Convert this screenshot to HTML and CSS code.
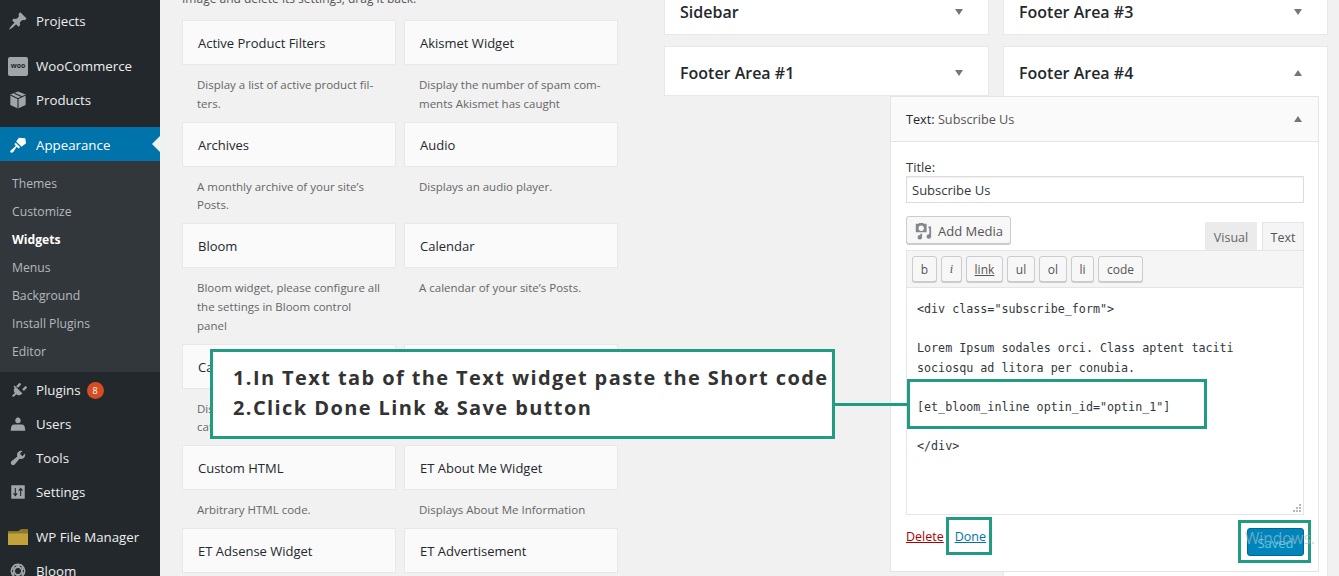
FILE: index.html
```html
<!DOCTYPE html>
<html lang="en">
<head>
<meta charset="utf-8">
<title>Widgets</title>
<link rel="stylesheet" href="styles.css">
</head>
<body>
<div class="page">
  <nav class="menu">
    <a class="item item-projects"><svg class="ico" viewBox="0 0 20 20"><path d="M10.44 3.020l1.820-1.820 6.360 6.350-1.830 1.820c-1.050-.68-2.480-.57-3.410.36l-.75.750c-.92.930-1.040 2.350-.35 3.410l-1.830 1.820-2.410-2.410-2.800 2.790c-.42.420-3.380 2.710-3.800 2.290s1.860-3.390 2.280-3.810l2.790-2.790L4.100 9.360l1.830-1.820c1.050.69 2.480.57 3.400-.36l.75-.75c.93-.92 1.050-2.350.36-3.410z"/></svg>Projects</a>
    <a class="item item-woo"><span class="woo">woo</span>WooCommerce</a>
    <a class="item item-products"><svg class="ico" viewBox="0 0 20 20"><path d="M10 .5l8.500 3.500v11.500L10 19.500l-8.500-4V4z"/><path class="seam" d="M1.500 4.500L10 8.500l8.500-4M10 8.500v11M6 2.500l8.500 4"/></svg>Products</a>
    <a class="item current"><svg class="ico" viewBox="0 0 20 20"><path d="M11 2l7 .5 1 5.500-5 4-6-6zM7.500 7.500l5 5-2 1.500-2-2-3.500 5.500c-1.500 1.500-4 1.500-3.500-1l6-5.500L6 9z"/></svg>Appearance</a>
    <div class="submenu">
      <a>Themes</a><a>Customize</a><a class="on">Widgets</a><a>Menus</a><a>Background</a><a>Install Plugins</a><a>Editor</a>
    </div>
    <a class="item"><svg class="ico" viewBox="0 0 20 20"><path d="M13.110 4.360L9.870 7.600 8 5.730l3.240-3.240c.35-.34 1.050-.25 1.550.25.5.51.59 1.200.32 1.620zm-8 1.770l.91-1.120 9.010 9.010-1.190.84c-1.170 1.100-2.600 1.140-3.630.85-.93-.26-1.640-.69-2.030-.99l-2.590 2.620c-.39.39-1.340.39-1.730 0s-.39-1.030 0-1.420l2.600-2.590c-.3-.4-.73-1.100-.99-2.030-.3-1.030-.26-2.460.84-3.630zm11.400 4.920l-1.870-1.870 3.240-3.240c.38-.35 1.070-.26 1.580.24.5.5.59 1.200.24 1.630z"/></svg>Plugins<span class="badge">8</span></a>
    <a class="item"><svg class="ico" viewBox="0 0 20 20"><path d="M10 9.250c-2.270 0-2.900-1.580-3.030-2.510C6.810 5.620 7.390 2.660 10 2.660s3.190 2.960 3.030 4.080c-.13.930-.76 2.510-3.030 2.510zm0 1.250c2.680 0 6-.4 7 1.400.85 1.700 1 5.600 1 5.600H2s.15-3.900 1-5.600c1-1.800 4.320-1.400 7-1.400z"/></svg>Users</a>
    <a class="item"><svg class="ico" viewBox="0 0 20 20"><path d="M16.680 9.770c-1.340 1.340-3.300 1.670-4.950.99l-5.410 6.520c-.99.990-2.590.990-3.570 0-.99-.98-.99-2.580 0-3.570l6.520-5.420c-.68-1.650-.35-3.610.99-4.950 1.280-1.280 3.120-1.620 4.720-1.060l-2.890 2.890 2.820 2.820 2.860-2.870c.53 1.580.18 3.390-1.090 4.650z"/></svg>Tools</a>
    <a class="item"><svg class="ico" viewBox="0 0 20 20"><path d="M2.500 2.500h15v15h-15z"/><path class="seam" d="M7 5.500v8M5 11.500l2 2.500 2-2.500M13 14.500v-8M11 8.500l2-2.500 2 2.500"/></svg>Settings</a>
    <a class="item item-fm"><svg class="folder" viewBox="0 0 20 16"><path d="M0 2.500h10l3-2h7V16H0z"/><path class="folder-top" d="M0 2.500h10l3-2h7v4H0z"/></svg>WP File Manager</a>
    <a class="item"><svg class="ico" viewBox="0 0 20 20"><g class="ring"><circle cx="10" cy="10" r="7.500"/><ellipse cx="10" cy="10" rx="7.500" ry="4"/><ellipse cx="10" cy="10" rx="7.500" ry="4" transform="rotate(60 10 10)"/><ellipse cx="10" cy="10" rx="7.500" ry="4" transform="rotate(120 10 10)"/></g></svg>Bloom</a>
  </nav>

  <main class="content">
    <section class="available">
      <p class="intro">Image and delete its settings, drag it back.</p>
      <div class="widget-grid">
        <div class="w"><h4>Active Product Filters</h4><p>Display a list of active product fil-<br>ters.</p></div>
        <div class="w"><h4>Akismet Widget</h4><p>Display the number of spam com-<br>ments Akismet has caught</p></div>
        <div class="w"><h4>Archives</h4><p>A monthly archive of your site’s<br>Posts.</p></div>
        <div class="w"><h4>Audio</h4><p>Displays an audio player.</p></div>
        <div class="w"><h4>Bloom</h4><p>Bloom widget, please configure all<br>the settings in Bloom control<br>panel</p></div>
        <div class="w"><h4>Calendar</h4><p>A calendar of your site’s Posts.</p></div>
        <div class="w"><h4>Categories</h4><p>Display a list or dropdown of<br>categories</p></div>
        <div class="w"><h4>Contact</h4><p>Contact widget</p></div>
        <div class="w"><h4>Custom HTML</h4><p>Arbitrary HTML code.</p></div>
        <div class="w"><h4>ET About Me Widget</h4><p>Displays About Me Information</p></div>
        <div class="w"><h4>ET Adsense Widget</h4><p>Display Adsense</p></div>
        <div class="w"><h4>ET Advertisement</h4><p>Display an advertisement</p></div>
      </div>
    </section>

    <section class="areas">
      <div class="area-col">
        <div class="area"><h3>Sidebar</h3><i class="tri down"></i></div>
        <div class="area"><h3>Footer Area #1</h3><i class="tri down"></i></div>
      </div>
      <div class="area-col">
        <div class="area"><h3>Footer Area #3</h3><i class="tri down"></i></div>
        <div class="area area-open"><h3>Footer Area #4</h3><i class="tri up"></i></div>
      </div>
    </section>

    <section class="panel">
      <header class="panel-head"><span><b>Text:</b> Subscribe Us</span><i class="tri up small"></i></header>
      <div class="panel-body">
        <label class="title-label">Title:</label>
        <div class="title-input">Subscribe Us</div>
        <div class="editor-top">
          <button class="btn add-media"><svg class="media-ico" viewBox="0 0 20 20"><path d="M2 2h3l1-1h4l1 1h3v9.500H2zm6 2a3 3 0 1 0 0 6 3 3 0 0 0 0-6zM16 5h3v11a2.500 2.500 0 1 1-2-2.400V7h-1zM9 13v4a2.500 2.500 0 1 1-2-2.400V13z"/></svg>Add Media</button>
          <div class="tabs"><span class="tab">Visual</span><span class="tab active">Text</span></div>
        </div>
        <div class="toolbar">
          <span class="q">b</span><span class="q it">i</span><span class="q ul">link</span><span class="q">ul</span><span class="q">ol</span><span class="q">li</span><span class="q">code</span>
        </div>
        <div class="code">
<pre>&lt;div class="subscribe_form"&gt;

Lorem Ipsum sodales orci. Class aptent taciti
sociosqu ad litora per conubia.

[et_bloom_inline optin_id="optin_1"]

&lt;/div&gt;</pre>
          <svg class="grip" viewBox="0 0 8 8"><path d="M6 0h2v2H6zM3 3h2v2H3zM6 3h2v2H6zM0 6h2v2H0zM3 6h2v2H3zM6 6h2v2H6z"/></svg>
        </div>
        <div class="panel-foot">
          <div class="links"><a class="del">Delete</a><a class="done">Done</a></div>
          <button class="save">Saved</button>
        </div>
      </div>
    </section>
  </main>

  <div class="callout">
    <div>1.In Text tab of the Text widget paste the Short code</div>
    <div>2.Click Done Link &amp; Save button</div>
  </div>
  <div class="connector"></div>
  <div class="mark mark-code"></div>
  <div class="mark mark-done"></div>
  <div class="mark mark-save"></div>
  <div class="watermark">Windows.</div>
</div>
</body>
</html>
```

FILE: styles.css
```css
* { box-sizing: border-box; }
html, body { margin: 0; height: 100%; overflow: hidden; }
body { font-family: "Open Sans", "Liberation Sans", sans-serif; font-size: 13px; color: #444; background: #f1f1f1; }
.page { position: relative; display: flex; width: 1339px; height: 576px; overflow: hidden; }

.menu { flex: 0 0 160px; background: #23282d; color: #eee; padding-top: 3px; height: 576px; overflow: hidden; }
.item { display: flex; align-items: center; height: 34px; padding: 2px 0 0 9px; color: #eee; font-size: 13.300px; position: relative; }
.ico { width: 18px; height: 18px; margin-right: 9px; fill: #a0a5aa; flex: none; }
.item-projects { padding-left: 8px; }
.item-projects .ico { width: 20px; height: 20px; margin-right: 8px; }
.seam { fill: none; stroke: #23282d; stroke-width: 1.200; }
.ring { fill: none; stroke: #a0a5aa; stroke-width: 1.400; }
.item-woo { margin-top: 11px; padding-left: 8px; }
.woo { width: 20px; height: 19px; margin-right: 8px; background: #a0a5aa; border-radius: 2px; color: #23282d; font-size: 7px; font-weight: 700; line-height: 18px; text-align: center; flex: none; }
.current { margin-top: 11px; background: #0073aa; color: #fff; }
.current .ico { fill: #fff; }
.current::after { content: ""; position: absolute; right: 0; top: 9px; border: 8px solid transparent; border-right-color: #f1f1f1; border-left-width: 0; }
.submenu { background: #32373c; padding: 9px 0 6px; }
.submenu a { display: block; height: 28px; line-height: 28px; padding-left: 12px; font-size: 12.200px; color: #b4b9be; }
.submenu .on { color: #fff; font-weight: 700; }
.badge { margin-left: 6px; width: 17px; height: 17px; border-radius: 50%; background: #d54e21; color: #fff; font-size: 9px; line-height: 17px; text-align: center; }
.item-fm { margin-top: 11px; padding-left: 8px; }
.folder { width: 20px; height: 16px; margin-right: 8px; fill: #c2a33a; flex: none; }
.folder-top { fill: #8f7a2c; }

.content { position: relative; flex: 1; min-width: 0; }
.available { position: absolute; left: 22px; top: -14px; width: 436px; }
.intro { margin: 0; height: 34px; line-height: 26px; font-size: 12px; color: #555; }
.widget-grid { display: grid; grid-template-columns: 214px 214px; column-gap: 8px; }
.w h4 { margin: 0; height: 45px; line-height: 45px; padding-left: 15px; font-size: 13px; font-weight: 500; color: #23282d; background: #fafafa; border: 1px solid #e8e8e8; }
.w p { margin: 0; padding: 11px 15px 8.500px; font-size: 11.500px; line-height: 18.600px; color: #666; white-space: nowrap; }

.areas { position: absolute; left: 504px; top: -15px; display: flex; gap: 14px; }
.area-col { width: 325px; display: flex; flex-direction: column; gap: 11px; }
.area { display: flex; justify-content: space-between; height: 50px; padding: 15px 25px 0 15px; background: #fff; border: 1px solid #e8e8e8; }
.area-open { height: 560px; border-bottom: 0; }
.area h3 { margin: 0; font-size: 16px; line-height: 22px; font-weight: 600; color: #23282d; }
.tri { width: 0; height: 0; margin-top: 8px; border-left: 4px solid transparent; border-right: 4px solid transparent; }
.tri.down { border-top: 6px solid #72777c; }
.tri.up { border-bottom: 6px solid #72777c; }

.panel { position: absolute; left: 730px; top: 96px; width: 429px; height: 476px; background: #fff; border: 1px solid #e5e5e5; }
.panel-head { display: flex; align-items: center; justify-content: space-between; height: 45px; padding: 0 16px 0 15px; background: #fafafa; border-bottom: 1px solid #e5e5e5; font-size: 12.700px; color: #555; }
.panel-head b { font-weight: 500; color: #23282d; }
.panel-head .tri { margin-top: 0; }
.panel-body { padding: 16px 14px 0 15px; }
.title-label { display: block; font-size: 13px; line-height: 18px; color: #32373c; }
.title-input { height: 27px; line-height: 27px; padding-left: 5px; border: 1px solid #ddd; font-size: 13px; color: #32373c; box-shadow: inset 0 1px 2px rgba(0,0,0,.07); }
.editor-top { display: flex; justify-content: space-between; align-items: flex-end; margin-top: 13px; height: 34px; }
.btn { display: flex; align-items: center; align-self: flex-start; height: 28px; padding: 2px 7px 0; background: #f7f7f7; border: 1px solid #ccc; border-radius: 3px; box-shadow: 0 1px 0 #ccc; font: 13px "Open Sans", sans-serif; color: #555; }
.media-ico { width: 18px; height: 18px; fill: #82878c; margin-right: 6px; }
.tabs { display: flex; gap: 5px; }
.tab { width: 52px; height: 28px; line-height: 31px; text-align: center; font-size: 12.500px; color: #666; background: #ebebeb; }
.tab.active { width: 42px; line-height: 29px; background: #f5f5f5; border: 1px solid #e5e5e5; border-bottom: 0; color: #555; }
.toolbar { display: flex; gap: 4px; height: 37px; padding: 5px 5px 0; background: #f5f5f5; border: 1px solid #e5e5e5; border-bottom: 0; }
.q { height: 26px; min-width: 21px; line-height: 25px; padding: 0 7.750px; text-align: center; background: #f7f7f7; border: 1px solid #ccc; border-radius: 3px; box-shadow: 0 1px 0 #ccc; font-size: 12px; color: #555; }
.q.it { font-style: italic; font-family: "Liberation Serif", serif; padding: 0; }
.q.ul { text-decoration: underline; }
.code { position: relative; height: 228px; padding: 12px 10px; border: 1px solid #e5e5e5; }
.code pre { margin: 0; font-family: "DejaVu Sans Mono", monospace; font-size: 11.700px; line-height: 19.500px; color: #32373c; }
.grip { position: absolute; right: 2px; bottom: 2px; width: 8px; height: 8px; fill: #b4b9be; }
.panel-foot { display: flex; justify-content: space-between; align-items: flex-start; }
.links { display: flex; gap: 11px; margin-top: 13px; font-size: 12.500px; line-height: 18px; }
.del { color: #a00; text-decoration: underline; }
.done { color: #0073aa; text-decoration: underline; }
.save { margin-top: 13px; width: 57px; height: 28px; padding-top: 2px; background: #0085ba; border: 1px solid #006799; border-radius: 3px; color: #66c6e4; font: 13px "Open Sans", sans-serif; }

.callout { position: absolute; left: 210px; top: 349px; width: 625px; height: 90px; padding: 11px 0 0 20px; background: #fff; border: 3px solid #229b83; font-size: 20px; font-weight: 700; letter-spacing: 1.400px; line-height: 30px; color: #333; white-space: nowrap; }
.connector { position: absolute; left: 835px; top: 403px; width: 73px; height: 3px; background: #229b83; }
.mark { position: absolute; border: 3px solid #229b83; }
.mark-code { left: 907px; top: 379px; width: 300px; height: 50px; }
.mark-done { left: 946px; top: 517px; width: 46px; height: 38px; }
.mark-save { left: 1238px; top: 520px; width: 73px; height: 43px; }
.watermark { position: absolute; left: 1245px; top: 527px; font-size: 15.500px; color: rgba(160,190,205,.65); }
```
